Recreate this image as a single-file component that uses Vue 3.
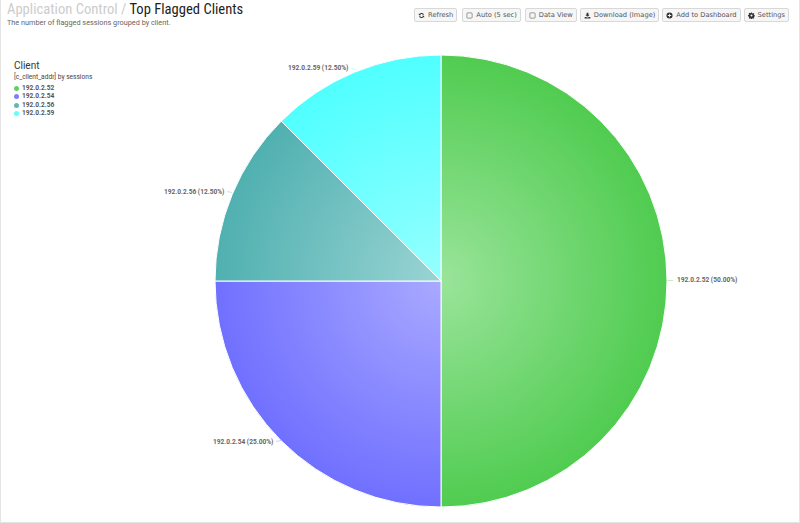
<template>
  <div class="page">
    <div class="head">
      <div class="titles">
        <h1 class="title"><span class="crumb">Application Control /</span> Top Flagged Clients</h1>
        <p class="sub">The number of flagged sessions grouped by client.</p>
      </div>
      <div class="actions">
        <button v-for="b in buttons" :key="b.label" class="btn">
          <svg class="ico" viewBox="0 0 16 16" v-html="b.icon"></svg>
          <span>{{ b.label }}</span>
        </button>
      </div>
    </div>

    <div class="chart">
      <div class="legend">
        <div class="legend-title">Client</div>
        <div class="legend-sub">[c_client_addr] by sessions</div>
        <div v-for="s in slices" :key="s.name" class="legend-item">
          <i class="dot" :style="{ background: s.color }"></i>{{ s.name }}
        </div>
      </div>
      <svg class="pie" width="798" height="492" viewBox="0 0 798 492">
        <defs>
          <radialGradient
            v-for="s in slices"
            :key="s.name"
            :id="s.id"
            gradientUnits="userSpaceOnUse"
            :cx="cx"
            :cy="cy"
            :r="r"
          >
            <stop offset="0" :stop-color="s.light" />
            <stop offset="1" :stop-color="s.color" />
          </radialGradient>
        </defs>
        <path
          v-for="s in slices"
          :key="s.name"
          :d="s.d"
          :fill="`url(#${s.id})`"
          stroke="#fff"
          stroke-width="1"
        />
        <g v-for="s in slices" :key="s.name">
          <path :d="s.line" fill="none" :stroke="s.color" stroke-width="1" opacity="0.35" />
          <text class="lbl" :x="s.lx" :y="s.ly">{{ s.name }} ({{ s.pct }})</text>
        </g>
      </svg>
    </div>
  </div>
</template>

<script setup>
const cx = 440;
const cy = 251;
const r = 226;

const data = [
  { name: "192.0.2.52", pct: "50.00%", share: 0.5, color: "#50cc50", light: "#9ae49a", lx: 676, ly: 252, line: "M666.5 250.5H672" },
  { name: "192.0.2.54", pct: "25.00%", share: 0.25, color: "#7070ff", light: "#a9a9ff", lx: 212, ly: 414, line: "M275 411.5L280 410.5" },
  { name: "192.0.2.56", pct: "12.50%", share: 0.125, color: "#50b0b0", light: "#9ad4d4", lx: 163, ly: 164, line: "M226 161.5L231 162.5" },
  { name: "192.0.2.59", pct: "12.50%", share: 0.125, color: "#50ffff", light: "#96ffff", lx: 287, ly: 40, line: "M350 38L355 40" },
];

function point(a) {
  return (cx + r * Math.sin(a)).toFixed(2) + " " + (cy - r * Math.cos(a)).toFixed(2);
}

let start = 0;
const slices = data.map(function (item, i) {
  const end = start + item.share * Math.PI * 2;
  const big = item.share > 0.5 ? 1 : 0;
  const d = `M${cx} ${cy}L${point(start)}A${r} ${r} 0 ${big} 1 ${point(end)}Z`;
  start = end;
  return { ...item, id: "grad" + i, d };
});

const buttons = [
  { label: "Refresh", icon: '<path d="M13.5 6.5A5.7 5.7 0 0 0 3.6 4.4L2 3v4.5h4.5L5 6a3.6 3.6 0 0 1 6.3 1zM2.5 9.5a5.7 5.7 0 0 0 9.9 2.1L14 13V8.500H9.500L11 10a3.600 3.600 0 0 1-6.300-1z"/>' },
  { label: "Auto (5 sec)", icon: '<rect x="2" y="2" width="12" height="12" rx="2" fill="none" stroke="currentColor" stroke-width="1.300"/>' },
  { label: "Data View", icon: '<rect x="2" y="2" width="12" height="12" rx="2" fill="none" stroke="currentColor" stroke-width="1.300"/>' },
  { label: "Download (Image)", icon: '<path d="M6 1.500h4V6h3L8 11 3 6h3zM1.500 11.500h3.300L8 13l3.200-1.500h3.300V15h-13z"/>' },
  { label: "Add to Dashboard", icon: '<path fill-rule="evenodd" d="M8 1a7 7 0 1 1 0 14A7 7 0 0 1 8 1zM7 4v3H4v2h3v3h2V9h3V7H9V4z"/>' },
  { label: "Settings", icon: '<path fill-rule="evenodd" d="M6.800 1h2.400l.4 2 1.300.6 1.800-1.100 1.700 1.700-1.100 1.800.6 1.300 2 .4v2.400l-2 .4-.6 1.300 1.100 1.800-1.700 1.700-1.800-1.100-1.300.6-.4 2H6.800l-.4-2-1.300-.6-1.800 1.100-1.700-1.700 1.100-1.800-.6-1.300-2-.4V6.700l2-.4.6-1.300-1.100-1.800 1.700-1.700 1.800 1.100 1.300-.6zM8 5.700a2.300 2.300 0 1 0 0 4.600 2.300 2.300 0 0 0 0-4.600z"/>' },
];
</script>

<style scoped>
.page {
  width: 800px;
  height: 523px;
  box-sizing: border-box;
  border-left: 1px solid #e4e4e4;
  border-right: 1px solid #e4e4e4;
  border-bottom: 1px solid #e4e4e4;
  background: #fff;
  display: flex;
  flex-direction: column;
  overflow: hidden;
  font-family: Roboto, "Liberation Sans", sans-serif;
}

.head {
  height: 30px;
  flex: none;
  display: flex;
  justify-content: space-between;
  padding: 0 10px 0 6px;
}

.title {
  margin: 0;
  font-size: 14.600px;
  font-stretch: 75%;
  font-weight: 400;
  line-height: 18px;
  color: #222;
  white-space: nowrap;
}

.crumb {
  color: #ccc;
}

.sub {
  margin: 0;
  font-size: 7.300px;
  line-height: 10px;
  color: #666;
}

.actions {
  display: flex;
  gap: 3px;
  padding-top: 8px;
}

.btn {
  height: 14px;
  box-sizing: border-box;
  display: flex;
  align-items: center;
  gap: 3px;
  padding: 0 3px;
  border: 1px solid #d8d8d8;
  border-radius: 2px;
  background: #f6f6f6;
  color: #555;
  font-family: "DejaVu Sans", sans-serif;
  font-size: 6.700px;
  white-space: nowrap;
}

.btn:first-child {
  margin-right: 2px;
}

.btn:nth-child(2) {
  margin-right: 1px;
}

.ico {
  width: 7px;
  height: 7px;
  fill: #333;
  color: #555;
}

.chart {
  position: relative;
  flex: 1;
}

.pie {
  display: block;
}

.legend {
  position: absolute;
  left: 13px;
  top: 29px;
  color: #333;
}

.legend-title {
  font-size: 10px;
  line-height: 13px;
}

.legend-sub {
  font-size: 6.600px;
  line-height: 10px;
  margin-bottom: 2px;
  color: #444;
}

.legend-item {
  display: flex;
  align-items: center;
  gap: 3px;
  font-size: 6.600px;
  font-weight: 700;
  line-height: 8.400px;
  color: #555;
}

.dot {
  width: 5px;
  height: 5px;
  border-radius: 50%;
  opacity: 0.9;
}

.lbl {
  font-family: Roboto, "Liberation Sans", sans-serif;
  font-size: 6.600px;
  font-weight: 700;
  fill: #666;
}
</style>
